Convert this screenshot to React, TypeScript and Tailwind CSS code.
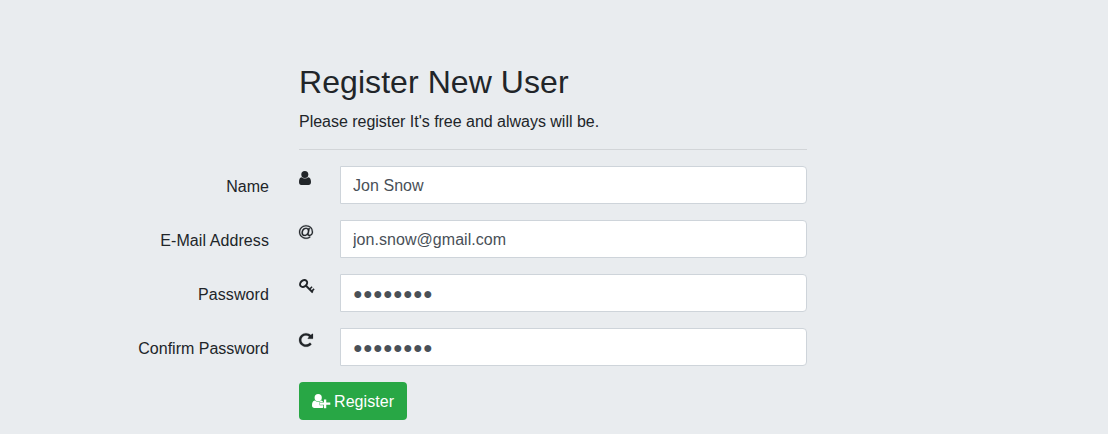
import type { ReactNode } from "react";

type Row = { label: string; spacing: string; value: string; icon: ReactNode };

const svg = (w: number, width: number, stroke: number, d: string) => (
  <svg width={width} height={16} viewBox={`0 0 ${w} 1792`} preserveAspectRatio="none" fill="currentColor" stroke="currentColor" strokeWidth={stroke} className="block overflow-visible">
    <path d={d} />
  </svg>
);

const user = (
  <svg width="12" height="16" viewBox="0 0 12 16" fill="currentColor" className="block">
    <ellipse cx="5.8" cy="4.500" rx="3.500" ry="3.500" />
    <path d="M2.500 7.200C.7 7.400 0 9.300 0 12c0 1.800.8 3 2.300 3h7.200c1.600 0 2.500-1.200 2.500-3 0-2.700-.8-4.600-2.700-4.800-1.900 1.700-4.900 1.700-6.800 0z" />
  </svg>
);
const key = (
  <svg width="16" height="16" viewBox="0 0 16 16" fill="none" stroke="currentColor" className="block">
    <ellipse cx="4.600" cy="5.500" rx="3.900" ry="3" strokeWidth="2" transform="rotate(-43 4.600 5.500)" />
    <path d="M6.800 7.500l7 7" strokeWidth="1.900" />
    <path d="M10.500 11.300l2.600-2.600M12.600 13.400l2.500-2.500" strokeWidth="1.500" />
  </svg>
);
const repeat = svg(1536, 14, 20, "M1536 256v448q0 26-19 45t-45 19h-448q-42 0-59-40-17-39 14-69l138-138q-148-137-349-137-104 0-198.500 40.500t-163.500 109.500-109.500 163.500-40.500 198.500 40.500 198.500 109.500 163.500 163.500 109.500 198.500 40.500q119 0 225-52t179-147q7-10 23-12 15 0 25 9l137 138q9 8 9.500 20.500t-7.500 22.500q-109 132-264 204.500t-327 72.500q-156 0-298-61t-245-164-164-245-61-298 61-298 164-245 245-164 298-61q147 0 284.500 55.500t244.500 156.500l130-129q29-31 70-14 39 17 39 59z");
const at = svg(1536, 14, 25, "M972 775q0-108-53.500-169t-147.500-61q-63 0-124 30.500t-110 84.500-79.500 137-30.500 180q0 112 53.500 173t150.500 61q96 0 176-66.500t122.500-166 42.500-203.500zm564 121q0 111-37 197t-98.500 135-131.500 74.500-145 27.500q-6 0-15.500.5t-16.500.5q-95 0-142-53-28-33-33-83-52 66-131.500 110t-173.500 44q-161 0-249.500-95.500t-88.500-269.500q0-157 66-290t179-210.500 246-77.500q87 0 155 35.500t106 99.500l2-19 11-56q1-6 5.500-12t9.500-6h118q5 0 13 11 5 5 3 16l-120 614q-5 24-5 48 0 39 12.500 52t44.500 13q28-1 57-5.500t73-24 77-50 57-89.500 24-137q0-292-174-466t-466-174q-130 0-248.500 51t-204 136.500-136.500 204-51 248.500 51 248.500 136.500 204 204 136.500 248.500 51q228 0 405-144 11-9 24-8t21 12l41 49q8 12 7 24-2 13-12 22-102 83-227.500 128t-258.500 45q-156 0-298-61t-245-164-164-245-61-298 61-298 164-245 245-164 298-61q344 0 556 212t212 556z");

const rows: Row[] = [
  { label: "Name", spacing: "", value: "Jon Snow", icon: user },
  { label: "E-Mail Address", spacing: "tracking-[0.08px]", value: "jon.snow@gmail.com", icon: at },
  { label: "Password", spacing: "tracking-[0.1px]", value: "●●●●●●●●", icon: key },
  { label: "Confirm Password", spacing: "", value: "●●●●●●●●", icon: repeat },
];

export default function App() {
  return (
    <main className="h-[434px] overflow-hidden bg-[#e9ecef] pt-[63px] font-['Liberation_Sans',sans-serif] text-base text-[#212529]">
      <header className="ml-[299px] w-[508px]">
        <h2 className="mb-[9px] text-[32px] leading-[38.4px] tracking-[0.07px]">Register New User</h2>
        <p className="leading-6 tracking-[-0.02px]">Please register It's free and always will be.</p>
        <hr className="mt-[15px] mb-4 border-t border-[#d2d5d8]" />
      </header>
      <form>
        {rows.map((row) => (
          <div key={row.label} className="mb-4 flex h-[38px]">
            <label className={`w-[269px] pt-[9px] text-right leading-6 ${row.spacing}`}>{row.label}</label>
            <span className="ml-[30px] w-[41px] pt-1">{row.icon}</span>
            <input
              type="text"
              defaultValue={row.value}
              className={`h-[38px] w-[467px] rounded-r border border-[#ced4da] bg-white px-3 pt-[7px] pb-[5px] text-[#495057] outline-none ${row.value.startsWith("●") ? "tracking-[0.33px]" : "tracking-[0.05px]"}`}
            />
          </div>
        ))}
        <button type="button" className="ml-[299px] flex h-[38px] w-[108px] items-center rounded bg-[#28a745] pl-[13px] text-white">
          <svg width="19" height="16" viewBox="0 0 19 16" fill="currentColor">
            <ellipse cx="6.200" cy="4.700" rx="3.600" ry="3.600" />
            <path d="M2.800 7.500C.8 7.800 0 9.800 0 12.500 0 14.100.9 15 2.400 15h8.200l1-1V9.500l-1-1.200-1.200-.8c-2 1.700-4.600 1.700-6.600 0z" />
            <path d="M13.100 6v9.300M7.600 10.600h10.800" stroke="#28a745" strokeWidth="3.400" fill="none" />
            <path d="M13.100 6.500v8.800M8 10.600h10.300" stroke="currentColor" strokeWidth="2.300" fill="none" />
          </svg>
          <span className="ml-[3px] pt-0.5 tracking-[0.08px]">Register</span>
        </button>
      </form>
    </main>
  );
}
